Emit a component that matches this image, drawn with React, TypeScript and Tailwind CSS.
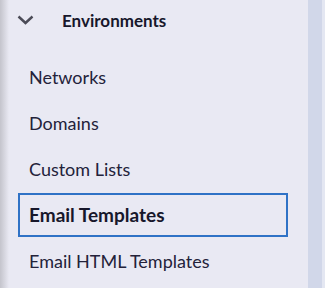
import React from 'react';

const items = ['Networks', 'Domains', 'Custom Lists', 'Email Templates', 'Email HTML Templates'];

const App: React.FC = () => {
  const active = 'Email Templates';

  return (
    <div className="flex h-[288px] w-[325px] overflow-hidden bg-[#e9e9f3] font-['Lato','Noto_Sans',sans-serif]">
      {/* left shadow */}
      <div className="w-[9px] shrink-0 bg-gradient-to-r from-[#c4c4cc] to-[#e9e9f3]" />

      {/* sidebar body */}
      <div className="flex w-[299px] shrink-0 flex-col">
        <div className="flex h-[41px] items-center">
          <svg width="17" height="10" viewBox="0 0 17 10" className="ml-[8px] mt-[-2px]">
            <path d="M1.5 1.5 L8.5 8 L15.5 1.5" fill="none" stroke="#4b4b57" strokeWidth="2.4" />
          </svg>
          <span className="ml-[28px] text-[17px] font-bold text-[#17172b]">Environments</span>
        </div>

        <ul className="mt-[14px] flex flex-col gap-[2px] pr-[20px]">
          {items.map((item) => (
            <li
              key={item}
              className={
                item === active
                  ? 'ml-[9px] flex h-[44px] items-center border-2 border-[#2f72c6] pl-[9px] text-[19px] font-bold text-[#17172b]'
                  : 'ml-[9px] flex h-[44px] items-center border-2 border-transparent pl-[9px] text-[18px] text-[#23223a]'
              }
            >
              {item}
            </li>
          ))}
        </ul>
      </div>

      {/* right strip */}
      <div className="w-[14px] shrink-0 bg-[#d1d7e9]" />
      <div className="w-[3px] shrink-0 bg-[#e4e7f2]" />
    </div>
  );
};

export default App;
